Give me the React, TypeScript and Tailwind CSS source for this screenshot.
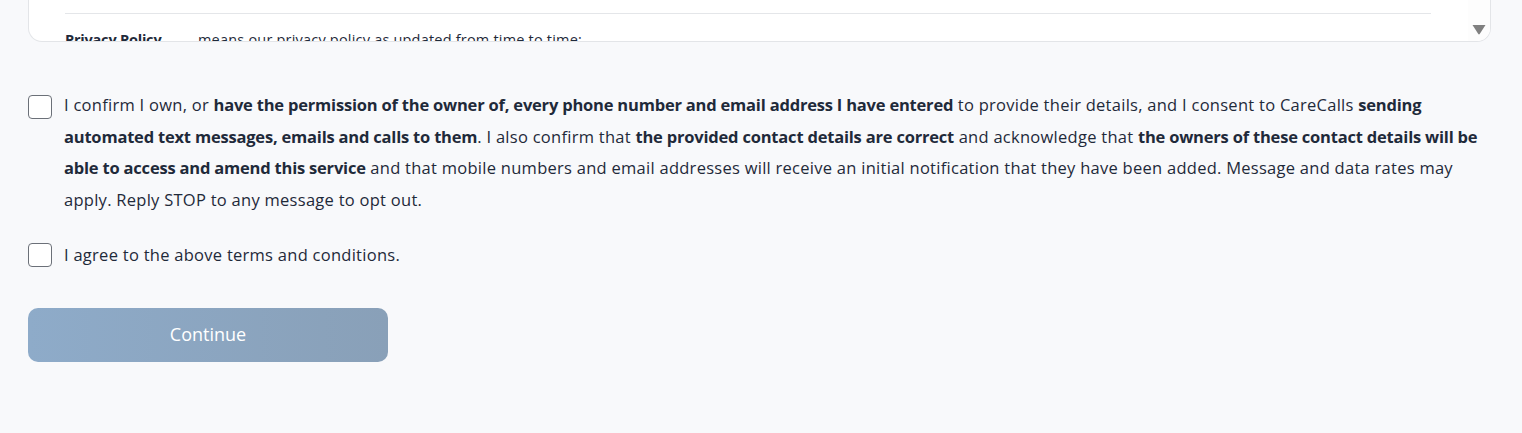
import React from "react";

const B = ({ children }: { children: React.ReactNode }) => (
  <b className="font-bold tracking-[-0.2px]">{children}</b>
);

export default function App() {
  return (
    <div
      className="w-[1522px] h-[433px] overflow-hidden bg-[#f8f9fb] text-[#1f2a3a]"
      style={{ fontFamily: '"Open Sans", "Noto Sans", sans-serif' }}
    >
      <div className="pl-[28px] pr-[31px]">
        <div className="relative h-[42px] overflow-hidden rounded-b-[14px] border border-t-0 border-[#e3e5e8] bg-white">
          <div className="pl-[36px] pr-[59px]">
            <div className="h-[13px]" />
            <div className="border-t border-[#e4e6e9]" />
            <div className="flex pt-[16px] text-[14.5px] leading-[20px]">
              <div className="w-[133px] font-bold tracking-[-0.2px]">Privacy Policy</div>
              <div className="tracking-[0.2px]">means our privacy policy as updated from time to time;</div>
            </div>
          </div>
          <div className="absolute right-0 top-0 h-full w-[22px] bg-[#fdfdfd]">
            <svg className="absolute left-[4px] top-[24px]" width="14" height="11" viewBox="0 0 14 11">
              <path d="M0.5 1 H13.5 L7.7 10 Q7 10.9 6.3 10 Z" fill="#808080" />
            </svg>
          </div>
        </div>
      </div>

      <div className="px-[28px] pt-[47px]">
        <div className="flex gap-[12px]">
          <div className="mt-[6px] h-[24px] w-[24px] shrink-0 rounded-[4px] border-[1.5px] border-[#6b7078] bg-white" />
          <div className="text-[16.5px] leading-[31.7px] tracking-[0.27px] whitespace-nowrap">
            <div>
              I confirm I own, or <B>have the permission of the owner of, every phone number and email address I have entered</B> to provide their details, and I consent to CareCalls <B>sending</B>
            </div>
            <div>
              <B>automated text messages, emails and calls to them</B>. I also confirm that <B>the provided contact details are correct</B> and acknowledge that <B>the owners of these contact details will be</B>
            </div>
            <div>
              <B>able to access and amend this service</B> and that mobile numbers and email addresses will receive an initial notification that they have been added. Message and data rates may
            </div>
            <div>apply. Reply STOP to any message to opt out.</div>
          </div>
        </div>

        <div className="mt-[23px] flex items-center gap-[12px]">
          <div className="h-[24px] w-[24px] shrink-0 rounded-[4px] border-[1.5px] border-[#6b7078] bg-white" />
          <p className="text-[16.5px] leading-[32px] tracking-[0.27px]">I agree to the above terms and conditions.</p>
        </div>

        <button className="mt-[37px] flex h-[54px] w-[360px] items-center justify-center rounded-[10px] bg-gradient-to-r from-[#8eabc9] to-[#89a0b8] text-[18px] font-medium text-white">
          Continue
        </button>
      </div>
    </div>
  );
}
